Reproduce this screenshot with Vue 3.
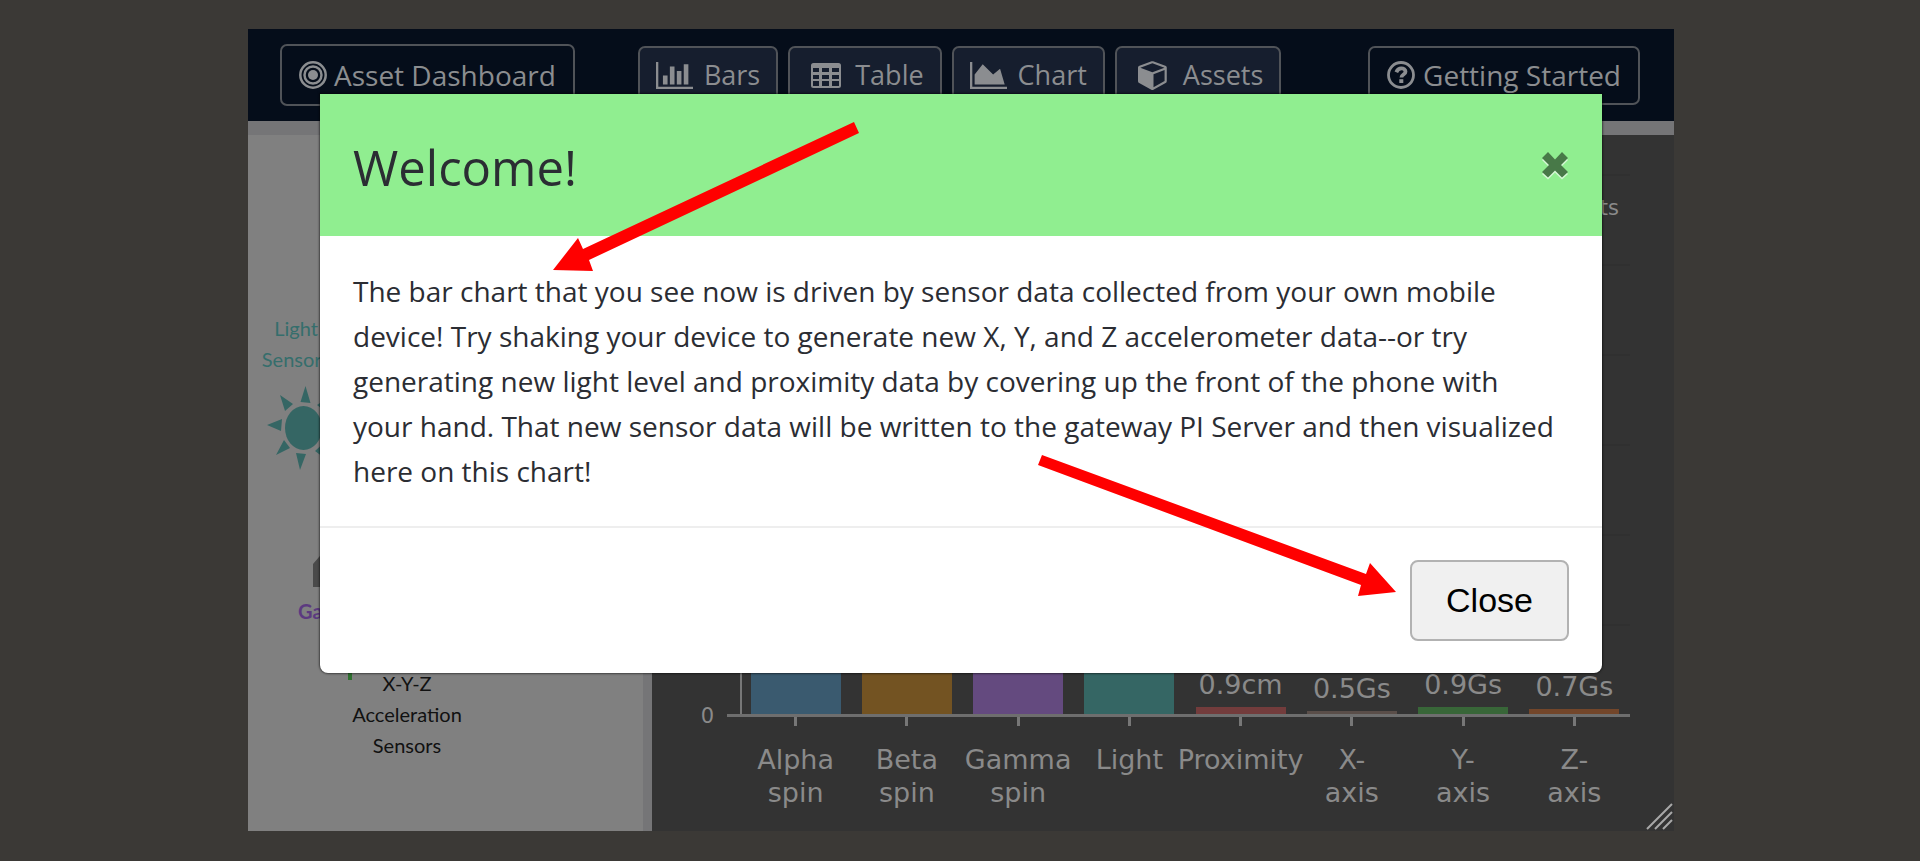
<script setup>
import { ref } from 'vue'

const open = ref(true)
const bars = [
  { label: ['Alpha', 'spin'], value: '', height: 320, color: '#3a5a6f' },
  { label: ['Beta', 'spin'], value: '', height: 260, color: '#735322' },
  { label: ['Gamma', 'spin'], value: '', height: 300, color: '#644a7f' },
  { label: ['Light'], value: '', height: 400, color: '#356664' },
  { label: ['Proximity'], value: '0.9cm', height: 7, color: '#733c3c' },
  { label: ['X-', 'axis'], value: '0.5Gs', height: 3, color: '#5a4e49' },
  { label: ['Y-', 'axis'], value: '0.9Gs', height: 7, color: '#386638' },
  { label: ['Z-', 'axis'], value: '0.7Gs', height: 5, color: '#73462a' }
]
</script>

<template>
  <div class="page">
    <div class="app">
      <header class="bar">
        <button type="button" class="btn brand">
          <svg class="ico-round" viewBox="0 0 28 28" aria-hidden="true">
            <circle cx="14" cy="14" r="12.7" fill="none" stroke="currentColor" stroke-width="2.5" />
            <circle cx="14" cy="14" r="8.5" fill="none" stroke="currentColor" stroke-width="2.5" />
            <circle cx="14" cy="14" r="5" fill="currentColor" />
          </svg>
          <span>Asset Dashboard</span>
        </button>
        <nav class="tabs">
          <button type="button" class="btn tab">
            <svg class="ico-wide" viewBox="0 128 2048 1536" preserveAspectRatio="none" aria-hidden="true">
              <path fill="currentColor" d="M640 896v512h-256v-512h256zm384-512v1024h-256v-1024h256zm1024 1152v128h-2048v-1536h128v1408h1920zm-640-896v768h-256v-768h256zm384-384v1152h-256v-1152h256z" />
            </svg>
            <span>Bars</span>
          </button>
          <button type="button" class="btn tab inset-tab">
            <svg class="ico-table" viewBox="0 0 30 25" aria-hidden="true">
              <path fill="currentColor" fill-rule="evenodd" d="M2.500 0h25a2.500 2.500 0 0 1 2.500 2.500v20a2.500 2.500 0 0 1-2.500 2.500h-25a2.500 2.500 0 0 1-2.500-2.500v-20a2.500 2.500 0 0 1 2.500-2.500zM2 5v4h6v-4zM11 5v4h7v-4zM21 5v4h7v-4zM2 12v4h6v-4zM11 12v4h7v-4zM21 12v4h7v-4zM2 18v5h6v-5zM11 18v5h7v-5zM21 18v5h7v-5z" />
            </svg>
            <span>Table</span>
          </button>
          <button type="button" class="btn tab">
            <svg class="ico-wide" viewBox="0 128 2048 1536" preserveAspectRatio="none" aria-hidden="true">
              <path fill="currentColor" d="M2048 1536v128h-2048v-1536h128v1408h1920zm-384-1024l256 896h-1664v-576l448-576 576 576z" />
            </svg>
            <span>Chart</span>
          </button>
          <button type="button" class="btn tab inset-tab">
            <svg class="ico-cube" viewBox="0 120 1792 1672" preserveAspectRatio="none" aria-hidden="true">
              <path fill="currentColor" d="M896 1629l640-349v-636l-640 233v752zm-64-865l698-254-698-254-698 254zm832-252v768q0 35-18 65t-49 47l-704 384q-28 16-61 16t-61-16l-704-384q-31-17-49-47t-18-65v-768q0-40 23-73t61-47l704-256q22-8 44-8t44 8l704 256q38 14 61 47t23 73z" />
            </svg>
            <span>Assets</span>
          </button>
        </nav>
        <button type="button" class="btn help">
          <svg class="ico-round" viewBox="0 0 28 28" aria-hidden="true">
            <circle cx="14" cy="14" r="12.500" fill="none" stroke="currentColor" stroke-width="2.800" />
            <path fill="none" stroke="currentColor" stroke-width="3.800" d="M9.300 11.200c1.200-3 3-3.800 5-3.800 2.400 0 4.200 1.300 4.200 3.300 0 2.900-4.100 2.700-4.100 5.800" />
            <rect x="12.300" y="18.200" width="4" height="3.800" fill="currentColor" />
          </svg>
          <span>Getting Started</span>
        </button>
      </header>

      <main class="content">
        <section class="sensors" aria-label="Sensors">
          <svg class="diagram" viewBox="0 0 395 696" width="395" height="696">
            <g fill="#356e6c" text-anchor="middle">
              <text x="48" y="201">Light</text>
              <text x="48" y="232">Sensors</text>
            </g>
            <g fill="#356664">
              <ellipse cx="55.500" cy="293" rx="18.500" ry="22" />
              <path d="M57.500 251l-5 16 10 1zM32 260l13 9-8 7zM19 290l15-6-1 12zM28 320l8-15 6 8zM52 335l-4-17 10 1zM67 316l12-11v20zM69 270l12-8-3 15z" />
            </g>
            <path fill="#4a4a4a" d="M65 429l12-14h30v37h-42z" />
            <text class="strong" x="50" y="484" fill="#5c3a80">Gamma</text>
            <path stroke="#2f7030" stroke-width="4" d="M102 500v45" />
            <g fill="#111" text-anchor="middle">
              <text x="159" y="556">X-Y-Z</text>
              <text x="159" y="587">Acceleration</text>
              <text x="159" y="618">Sensors</text>
            </g>
          </svg>
        </section>

        <section class="chart" aria-label="Sensor chart">
          <div class="y-axis"><span class="zero">0</span></div>
          <div class="plot">
            <span class="unit">ts</span>
            <div v-for="bar in bars" :key="bar.label.join('')" class="col">
              <span class="value">{{ bar.value }}</span>
              <div class="fill" :style="{ height: bar.height + 'px', background: bar.color }"></div>
            </div>
          </div>
          <div class="labels">
            <div v-for="bar in bars" :key="bar.label.join('')" class="label">
              <span v-for="part in bar.label" :key="part">{{ part }}</span>
            </div>
          </div>
        </section>
      </main>

      <svg class="grip" viewBox="0 0 27 27" aria-hidden="true">
        <path fill="none" stroke="#a8a8a8" stroke-width="2" d="M1 26L26 1M9 26L26 9M17 26l9-9" />
      </svg>

      <div v-if="open" class="modal" role="dialog" aria-labelledby="modal-title">
        <div class="modal-head">
          <h1 id="modal-title">Welcome!</h1>
          <button type="button" class="dismiss" aria-label="Dismiss" @click="open = false">
            <svg viewBox="0 0 27 28" aria-hidden="true">
              <path fill="#d5f8d5" d="M6 2l7 7.500 7-7.500 6 6-7 7 7 7-6 5.500-7-7-7 7-6-5.500 7-7-7-7z" />
              <path fill="#487948" d="M6 0l7 7.500 7-7.500 6 6-7 7 7 7-6 5.500-7-7-7 7-6-5.500 7-7-7-7z" />
            </svg>
          </button>
        </div>
        <p class="modal-body">
          The bar chart that you see now is driven by sensor data collected from your own mobile<br>
          device! Try shaking your device to generate new X, Y, and Z accelerometer data--or try<br>
          generating new light level and proximity data by covering up the front of the phone with<br>
          your hand. That new sensor data will be written to the gateway PI Server and then visualized<br>
          here on this chart!
        </p>
        <div class="modal-foot">
          <button type="button" class="close" @click="open = false">Close</button>
        </div>
        <svg class="arrows" viewBox="0 0 1282 579" preserveAspectRatio="none" aria-hidden="true">
          <path fill="#f00" d="M534 28L539 39L269 166L273 177L233 176L258 144L263 155Z" />
          <path fill="#f00" d="M718 371L722 361L1046 480L1050 469L1076 498L1038 502L1041 491Z" />
        </svg>
      </div>
    </div>
  </div>
</template>

<style>
body {
  background: #3b3936;
}
</style>

<style scoped>
.page {
  box-sizing: border-box;
  display: flex;
  min-height: 100vh;
  padding: 29px 246px 30px 248px;
  font-family: "Open Sans", "Noto Sans", sans-serif;
}
.app {
  position: relative;
  flex: 1;
  display: flex;
  flex-direction: column;
  min-width: 0;
  background: #757577;
}
.bar {
  box-sizing: border-box;
  display: flex;
  align-items: center;
  height: 92px;
  padding: 0 34px 0 32px;
  background: #050d1a;
}
.btn {
  box-sizing: border-box;
  display: flex;
  align-items: center;
  height: 59px;
  padding: 0 17px;
  border: 2px solid #505358;
  border-radius: 7px;
  background: transparent;
  color: #8b8d90;
  font-family: inherit;
  font-size: 28px;
  line-height: 40px;
  white-space: nowrap;
}
.brand {
  height: 62px;
  gap: 7px;
}
.help {
  gap: 8px;
  margin-left: auto;
}
.tabs {
  display: flex;
  gap: 10px;
  margin-left: 63px;
}
.tab {
  gap: 11px;
  padding: 0 16px;
  background: #161e2e;
  font-size: 27px;
}
.inset-tab {
  gap: 14px;
  padding-left: 21px;
}
.ico-round {
  width: 28px;
  height: 28px;
}
.ico-wide {
  width: 37px;
  height: 27px;
}
.ico-table {
  width: 30px;
  height: 25px;
}
.ico-cube {
  width: 31px;
  height: 29px;
}
.content {
  flex: 1;
  display: flex;
  margin-top: 14px;
}
.sensors {
  flex: none;
  width: 395px;
  margin-right: 9px;
  background: #808080;
}
.diagram {
  display: block;
  font-family: Lato, sans-serif;
  font-size: 20px;
}
.strong {
  font-weight: bold;
}
.chart {
  flex: 1;
  display: grid;
  grid-template-columns: 88px 1fr;
  grid-template-rows: 1fr 114px;
  padding-right: 44px;
  background: #333;
  color: #8a8a8a;
  font-family: "DejaVu Sans", Verdana, sans-serif;
}
.y-axis {
  display: flex;
  flex-direction: column;
  justify-content: flex-end;
  align-items: flex-end;
  padding-right: 26px;
  font-size: 21px;
  line-height: 24px;
}
.zero {
  margin-bottom: -11px;
}
.plot {
  position: relative;
  display: grid;
  grid-template-columns: repeat(8, 1fr);
  border-bottom: 3px solid #6e6e6e;
  background: repeating-linear-gradient(to top, transparent 0 88px, #303030 88px 90px);
}
.plot::before {
  content: "";
  position: absolute;
  left: -13px;
  bottom: -3px;
  width: 13px;
  height: 3px;
  background: #6e6e6e;
}
.plot::after {
  content: "";
  position: absolute;
  left: 0;
  top: 42px;
  bottom: 0;
  width: 2px;
  background: #777;
}
.unit {
  position: absolute;
  top: 61px;
  right: 11px;
  font-size: 21px;
  line-height: 24px;
}
.col {
  display: flex;
  flex-direction: column;
  justify-content: flex-end;
  align-items: center;
}
.fill {
  width: 90px;
}
.value {
  margin-bottom: 6px;
  font-size: 27px;
  line-height: 32px;
}
.labels {
  grid-column: 2;
  display: grid;
  grid-template-columns: repeat(8, 1fr);
}
.label {
  display: flex;
  flex-direction: column;
  align-items: center;
  min-width: 0;
  font-size: 27px;
  line-height: 33px;
  white-space: nowrap;
}
.label::before {
  content: "";
  width: 3px;
  height: 9px;
  margin-bottom: 17px;
  background: #777;
}
.grip {
  position: absolute;
  right: 1px;
  bottom: 1px;
  width: 27px;
  height: 27px;
}
.modal {
  position: absolute;
  top: 65px;
  left: 72px;
  right: 72px;
  border-radius: 0 0 8px 8px;
  background: #fff;
  box-shadow: 0 0 2px 1px rgba(0, 0, 0, 0.5);
  color: #2b2d33;
}
.modal-head {
  box-sizing: border-box;
  display: flex;
  align-items: center;
  justify-content: space-between;
  height: 142px;
  padding: 4px 33px 0;
  background: #90ee90;
}
.modal-head h1 {
  margin: 0;
  font-size: 49px;
  font-weight: 400;
  line-height: 64px;
}
.dismiss {
  padding: 0 0 2px;
  border: 0;
  background: none;
}
.dismiss svg {
  display: block;
  width: 27px;
  height: 28px;
}
.modal-body {
  margin: 0;
  padding: 33px 20px 32px 33px;
  font-size: 28px;
  line-height: 45px;
  white-space: nowrap;
}
.modal-foot {
  display: flex;
  justify-content: flex-end;
  padding: 32px 33px;
  border-top: 2px solid #eee;
}
.close {
  box-sizing: border-box;
  height: 81px;
  padding: 0 34px;
  border: 2px solid #b2b2b2;
  border-radius: 8px;
  background: #f0f0f0;
  color: #000;
  font-family: "Liberation Sans", Arial, sans-serif;
  font-size: 34px;
}
.arrows {
  position: absolute;
  inset: 0;
  width: 100%;
  height: 100%;
  pointer-events: none;
}
</style>
